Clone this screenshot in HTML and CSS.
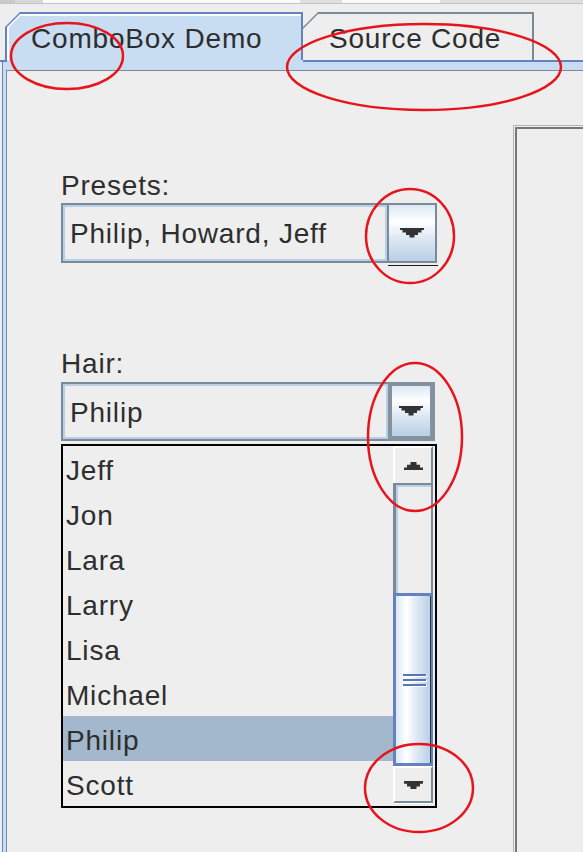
FILE: index.html
```html
<!DOCTYPE html>
<html>
<head>
<meta charset="utf-8">
<link rel="stylesheet" href="styles.css">
</head>
<body>
<div class="topbar"></div>
<div class="topline"></div>
<div class="tabs">
  <div class="tab-active"><div class="tab-hl"><div class="tab-fill">ComboBox Demo</div></div></div>
  <div class="tab-inactive"><div class="tab-fill2">Source Code</div></div>
</div>
<div class="frame">
  <div class="frame-inner">
    <div class="panel">
      <div class="col">
        <div class="label label-presets">Presets:</div>
        <div class="combo">
          <div class="combo-field">Philip, Howard, Jeff</div>
          <div class="combo-btn">
            <svg width="24" height="10" viewBox="0 0 24 10"><path d="M0 0H24V2H21.5V4.5H18V7H14.5V9.5H9.5V7H6V4.5H2.5V2H0Z" fill="#333"/></svg>
          </div>
        </div>
        <div class="underline"></div>
        <div class="label label-hair">Hair:</div>
        <div class="combo combo2">
          <div class="combo-field">Philip</div>
          <div class="combo-btn combo-btn-pressed">
            <svg width="24" height="10" viewBox="0 0 24 10"><path d="M0 0H24V2H21.5V4.5H18V7H14.5V9.5H9.5V7H6V4.5H2.5V2H0Z" fill="#333"/></svg>
          </div>
        </div>
        <div class="list">
          <div class="list-items">
            <div class="row">Jeff</div>
            <div class="row">Jon</div>
            <div class="row">Lara</div>
            <div class="row">Larry</div>
            <div class="row">Lisa</div>
            <div class="row">Michael</div>
            <div class="row sel">Philip</div>
            <div class="row">Scott</div>
          </div>
          <div class="scrollbar">
            <div class="sb-btn">
              <svg width="19" height="8" viewBox="0 0 19 8"><path d="M6.5 0H12.5V2.7H16V5.4H19V8H0V5.4H3V2.7H6.5Z" fill="#333"/></svg>
            </div>
            <div class="sb-track"></div>
            <div class="sb-thumb">
              <div class="grip"></div>
              <div class="grip"></div>
              <div class="grip"></div>
            </div>
            <div class="sb-btn sb-btn-down">
              <svg width="19" height="8" viewBox="0 0 19 8"><path d="M0 0H19V2.7H16V5.4H12.5V8H6.5V5.4H3V2.7H0Z" fill="#333"/></svg>
            </div>
          </div>
        </div>
      </div>
      <div class="rbox"><div class="rbox-inner"></div></div>
    </div>
  </div>
</div>
<svg class="marks" width="583" height="852" viewBox="0 0 583 852">
  <g fill="none" stroke="#e8141c" stroke-width="2.5">
    <ellipse cx="67" cy="56" rx="56" ry="33"/>
    <ellipse cx="424" cy="67" rx="137" ry="43"/>
    <ellipse cx="410" cy="236" rx="44" ry="47"/>
    <ellipse cx="415" cy="437" rx="47" ry="74"/>
    <ellipse cx="419" cy="788" rx="54" ry="44"/>
  </g>
</svg>
</body>
</html>
```
FILE: styles.css
```css
* { box-sizing: border-box; }
html, body { margin: 0; padding: 0; }
body {
  width: 583px;
  height: 852px;
  overflow: hidden;
  position: relative;
  background: #eeeeee;
  font-family: "Liberation Sans", Arial, sans-serif;
  font-size: 28px;
  letter-spacing: 0.8px;
  color: #2e2e2e;
}

.topbar {
  height: 3px;
  background: linear-gradient(to right, #c9c9c9 0 15px, #d8d8d8 15px 43px, #fbfbfb 43px 300px, #dedede 300px 342px, #fbfbfb 342px 440px, #dedede 440px);
}
.topline { height: 1px; background: #c4c4c4; }

.tabs {
  display: flex;
  height: 48px;
  margin-top: 8px;
  padding-left: 5px;
}
.tab-active {
  width: 298px;
  background: #6382bf;
  padding: 2px 2px 0 2px;
  clip-path: polygon(15px 0, 100% 0, 100% 100%, 0 100%, 0 15px);
}
.tab-hl {
  height: 100%;
  background: #ffffff;
  padding: 2px 0 0 2px;
  clip-path: polygon(13px 0, 100% 0, 100% 100%, 0 100%, 0 13px);
}
.tab-fill {
  height: 100%;
  background: #c8ddf2;
  clip-path: polygon(11px 0, 100% 0, 100% 100%, 0 100%, 0 11px);
  padding: 7px 0 0 22px;
  line-height: 31px;
  white-space: nowrap;
}
.tab-inactive {
  width: 231px;
  background: #7a8a99;
  padding: 2px 2px 0 0;
  clip-path: polygon(15px 0, 100% 0, 100% 100%, 0 100%, 0 15px);
}
.tab-fill2 {
  height: 100%;
  background: #eeeeee;
  clip-path: polygon(15px 0, 100% 0, 100% 100%, 0 100%, 0 15px);
  padding: 9px 0 0 26px;
  line-height: 31px;
  white-space: nowrap;
}

.frame {
  padding-top: 2px;
  background: linear-gradient(to right, #6382bf 0 7px, #c8ddf2 7px 303px, #6382bf 303px) 0 0 / 100% 2px no-repeat;
}
.frame-inner {
  margin-left: 2px;
  border-left: 1px solid #6382bf;
  background: #c8ddf2;
  padding: 8px 0 0 3px;
}
.panel {
  height: 782px;
  border-top: 1px solid #7a8a99;
  border-left: 1px solid #7a8a99;
  background: #eeeeee;
  display: flex;
  align-items: flex-start;
  padding-left: 54px;
}

.col {
  width: 376px;
  flex: none;
}
.label {
  height: 30px;
  line-height: 30px;
  white-space: nowrap;
}
.label-presets { margin-top: 100px; }
.label-hair { margin-top: 83px; }

.combo {
  display: flex;
  height: 60px;
  margin-top: 2px;
}
.combo2 {
  height: 59px;
  width: 374px;
  margin-top: 3px;
}
.combo-field {
  flex: 1;
  border: 2px solid #7a8a99;
  border-right: none;
  box-shadow: inset 0 0 0 2px #b8cfe5;
  background: #eeeeee;
  padding: 2px 0 0 7px;
  display: flex;
  align-items: center;
  white-space: nowrap;
}
.combo-btn {
  width: 50px;
  flex: none;
  border: 2px solid #7a8a99;
  background: linear-gradient(#dde8f3, #ffffff 30%, #dde8f3 60%, #b8cfe5);
  display: flex;
  align-items: center;
  justify-content: center;
}
.combo-btn-pressed {
  width: 47px;
  border-width: 4px 5px 5px 4px;
  border-color: #8391a0;
}
.underline {
  margin: 2px 0 0 327px;
  width: 50px;
  height: 1px;
  background: #1a1a1a;
}

.list {
  margin-top: 3px;
  height: 364px;
  border: 2px solid #000000;
  display: flex;
}
.list-items { flex: 1; }
.row {
  height: 45px;
  padding: 4px 0 0 3px;
  line-height: 41px;
  white-space: nowrap;
}
.row.sel { background: #a3b8cc; }

.scrollbar {
  width: 40px;
  flex: none;
  margin-right: 2px;
  height: 357px;
  display: flex;
  flex-direction: column;
}
.sb-btn {
  height: 37px;
  flex: none;
  background: #eeeeee;
  border-top: 2px solid #ffffff;
  border-left: 2px solid #ffffff;
  border-right: 2px solid #7a8a99;
  display: flex;
  align-items: center;
  justify-content: center;
}
.sb-btn-down {
  border-bottom: 2px solid #7a8a99;
  box-shadow: 0 1px 0 #ffffff;
}
.sb-track {
  flex: 1;
  background: #eeeeee;
  border-top: 2px solid #7a8a99;
  border-left: 3px solid #7a8a99;
  border-right: 2px solid #7a8a99;
  box-shadow: inset 2px 2px 0 #b8cfe5;
}
.sb-thumb {
  height: 173px;
  flex: none;
  border: 3px solid #6382bf;
  border-right-width: 2px;
  box-shadow: inset -1px 0 0 #333333;
  background: linear-gradient(to right, #dde8f3, #ffffff 30%, #dde8f3 60%, #b8cfe5);
  display: flex;
  flex-direction: column;
  align-items: center;
  justify-content: center;
  gap: 3px;
  padding-left: 2px;
}
.grip {
  width: 23px;
  height: 2px;
  background: #5577b8;
  box-shadow: 1px 1px 0 #ffffff;
}

.rbox {
  flex: 1;
  align-self: stretch;
  margin: 54px 0 0 76px;
  border-top: 1px solid #b4b4b4;
  border-left: 1px solid #b4b4b4;
  padding: 1px 0 0 1px;
  display: flex;
}
.rbox-inner {
  flex: 1;
  border-top: 2px solid #777777;
  border-left: 2px solid #777777;
}

.marks {
  position: absolute;
  left: 0;
  top: 0;
  pointer-events: none;
}
```
